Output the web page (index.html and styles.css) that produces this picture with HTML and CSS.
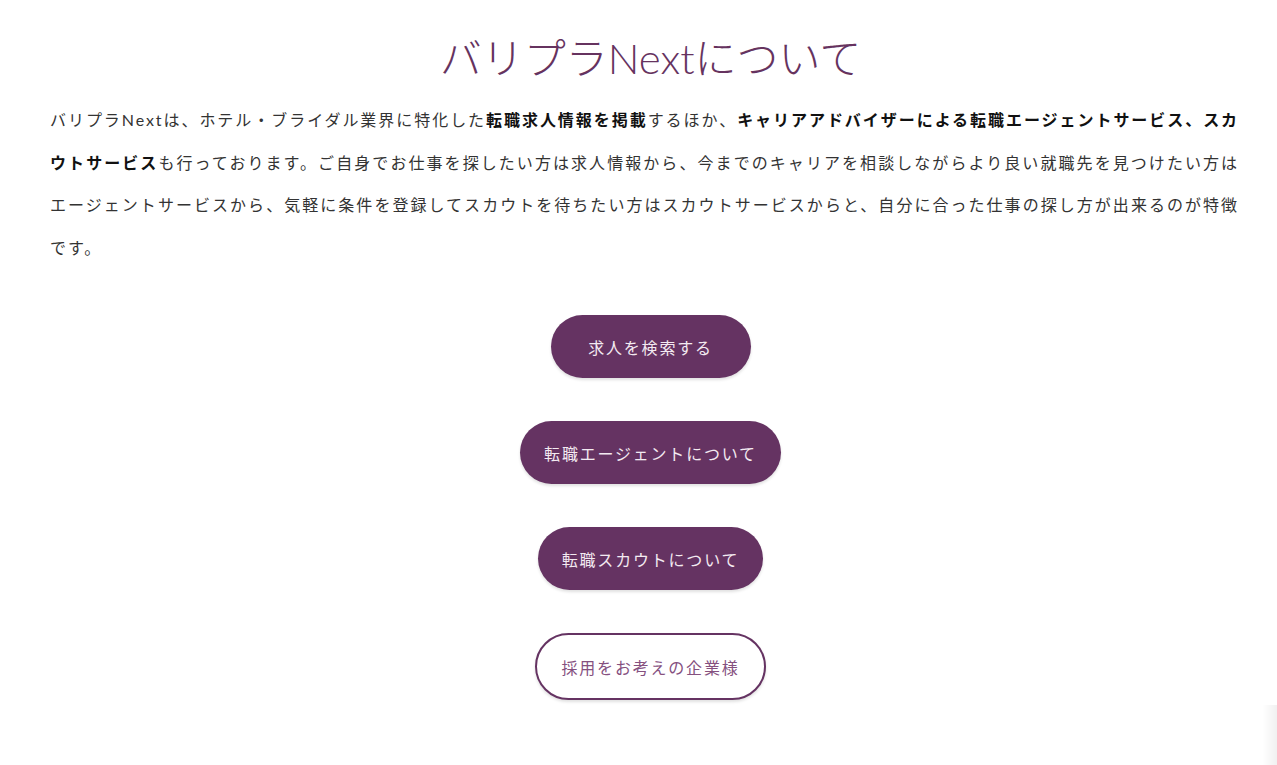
FILE: index.html
```html
<!DOCTYPE html>
<html lang="ja">
<head>
<meta charset="utf-8">
<title>バリプラNextについて</title>
<link rel="stylesheet" href="styles.css">
</head>
<body>
<main class="about">
  <h1 class="about-title">バリプラNextについて</h1>
  <p class="about-text">バリプラNextは、ホテル・ブライダル業界に特化した<strong>転職求人情報を掲載</strong>するほか、<strong>キャリアアドバイザーによる転職エージェントサービス、スカウトサービス</strong>も行っております。ご自身でお仕事を探したい方は求人情報から、今までのキャリアを相談しながらより良い就職先を見つけたい方はエージェントサービスから、気軽に条件を登録してスカウトを待ちたい方はスカウトサービスからと、自分に合った仕事の探し方が出来るのが特徴です。</p>
  <div class="actions">
    <a class="btn btn-fill btn-wide" href="#">求人を検索する</a>
    <a class="btn btn-fill" href="#">転職エージェントについて</a>
    <a class="btn btn-fill" href="#">転職スカウトについて</a>
    <a class="btn btn-outline" href="#">採用をお考えの企業様</a>
  </div>
</main>
<div class="corner-shade"></div>
</body>
</html>
```
FILE: styles.css
```css
html, body {
  margin: 0;
  padding: 0;
  background: #ffffff;
}
body {
  font-family: Lato, "Noto Sans CJK JP", sans-serif;
  color: #333333;
  height: 765px;
  overflow: hidden;
}
.about {
  padding: 33px 38px 0 50px;
}
.about-title {
  margin: 0 0 0 12px;
  text-align: center;
  font-size: 42px;
  line-height: 50px;
  font-weight: 300;
  color: #66335f;
  letter-spacing: 0;
}
.about-text {
  margin: 16px 0 0;
  font-size: 16px;
  line-height: 42.5px;
  letter-spacing: 1.9px;
  text-align: justify;
  color: #333333;
}
.about-text strong {
  font-weight: 700;
  color: #111111;
}
.actions {
  margin-top: 46px;
  display: flex;
  flex-direction: column;
  align-items: center;
  gap: 43px;
  margin-left: 12px;
}
.btn {
  display: flex;
  align-items: center;
  justify-content: center;
  box-sizing: border-box;
  height: 63px;
  padding: 0 24px;
  border-radius: 32px;
  font-size: 16px;
  letter-spacing: 1.8px;
  text-decoration: none;
  box-shadow: 0 2px 3px rgba(0, 0, 0, 0.12);
}
.btn-fill {
  background: #653362;
  color: #f3eaf1;
}
.btn-wide {
  min-width: 200px;
}
.btn-outline {
  height: 67px;
  padding: 0 24px;
  background: #ffffff;
  color: #85507f;
  border: 2px solid #653362;
  border-radius: 34px;
}
.corner-shade {
  position: fixed;
  right: 0;
  bottom: 0;
  width: 14px;
  height: 60px;
  background: linear-gradient(to right, rgba(0,0,0,0), rgba(0,0,0,0.06));
}
```
